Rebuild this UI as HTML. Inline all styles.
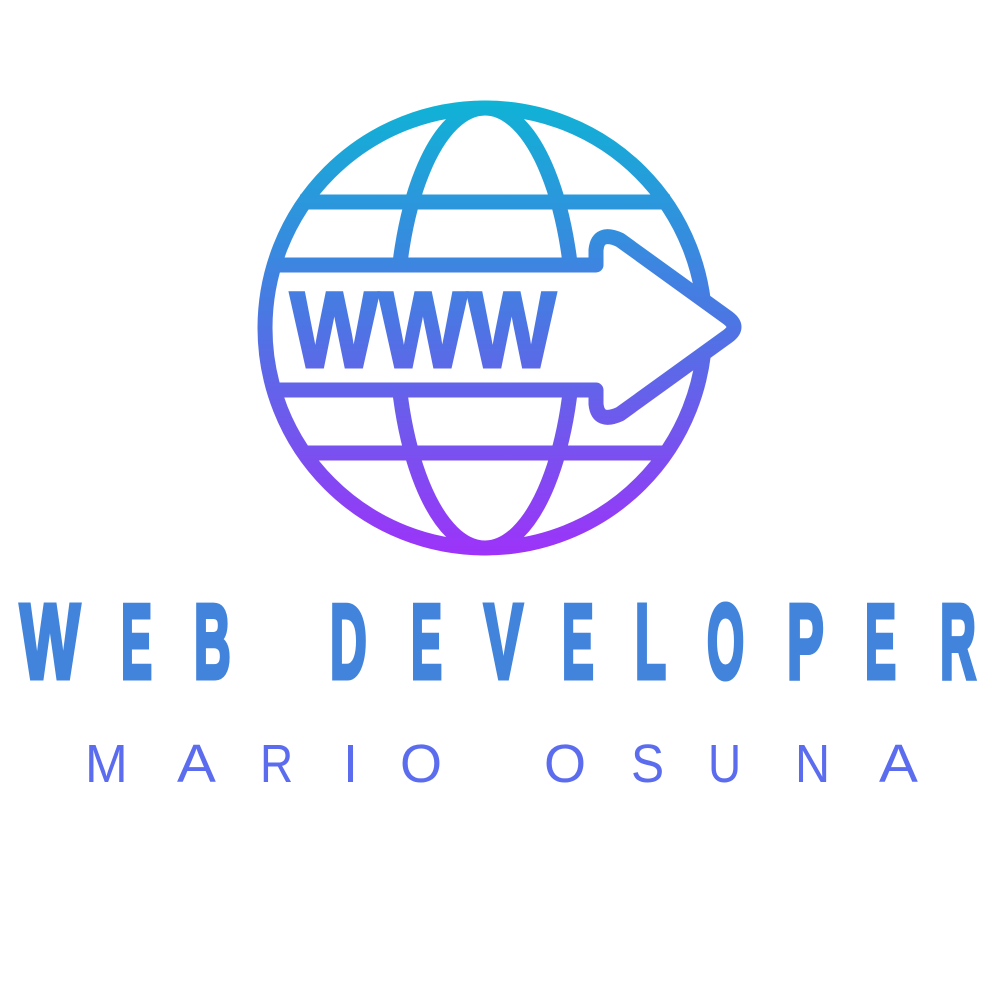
<!DOCTYPE html>
<html><head><meta charset="utf-8"><style>
html,body{margin:0;padding:0;background:#fff;width:1000px;height:1000px;overflow:hidden}
svg{display:block}
</style></head><body>
<svg width="1000" height="1000" viewBox="0 0 1000 1000" xmlns="http://www.w3.org/2000/svg">
<defs>
<linearGradient id="g" gradientUnits="userSpaceOnUse" x1="0" y1="101" x2="0" y2="555">
<stop offset="0" stop-color="#0fb3d5"/>
<stop offset="0.5" stop-color="#4e74e4"/>
<stop offset="1" stop-color="#9d33f9"/>
</linearGradient>
</defs>
<g fill="none" stroke="url(#g)" stroke-width="15">
<circle cx="485" cy="328" r="220"/>
<ellipse cx="485" cy="328" rx="89" ry="220"/>
<line x1="300" y1="202" x2="670" y2="202"/>
<line x1="300" y1="453" x2="670" y2="453"/>
</g>
<path d="M281 272 H596 V250 Q598 230 620 240 L728 318 Q738 327 728 336 L620 414 Q598 424 596 404 V383 H281 Z" fill="#fff"/>
<path d="M272 265 H596 V250 Q598 230 620 240 L728 318 Q740 327 728 336 L620 414 Q598 424 596 404 V390 H272" fill="none" stroke="url(#g)" stroke-width="15" stroke-linejoin="round"/>
<text x="290" y="367" font-family="Liberation Sans, sans-serif" font-weight="bold" font-size="108" fill="url(#g)" stroke="url(#g)" stroke-width="3" textLength="266" lengthAdjust="spacingAndGlyphs">WWW</text>
<g font-family="Liberation Sans, sans-serif" font-weight="bold" font-size="106" fill="#4284db" stroke="#4284db" stroke-width="5" stroke-linejoin="miter">
<text transform="translate(20,678) scale(0.6,1)">W</text>
<text transform="translate(121,678) scale(0.44,1)">E</text>
<text transform="translate(194,678) scale(0.48,1)">B</text>
<text transform="translate(330,678) scale(0.48,1)">D</text>
<text transform="translate(411,678) scale(0.44,1)">E</text>
<text transform="translate(484,678) scale(0.55,1)">V</text>
<text transform="translate(562,678) scale(0.45,1)">E</text>
<text transform="translate(635,678) scale(0.48,1)">L</text>
<text transform="translate(707,678) scale(0.45,1)">O</text>
<text transform="translate(787,678) scale(0.52,1)">P</text>
<text transform="translate(865,678) scale(0.44,1)">E</text>
<text transform="translate(940,678) scale(0.47,1)">R</text>
</g>
<g font-family="Liberation Sans, sans-serif" font-size="54" fill="#5b6cef">
<text transform="translate(85,782) scale(0.95,1)">M</text>
<text transform="translate(177,782) scale(1.08,1)">A</text>
<text transform="translate(260,782) scale(0.85,1)">R</text>
<text transform="translate(343,782)">I</text>
<text transform="translate(400,782) scale(1,1)">O</text>
<text transform="translate(544,782) scale(1,1)">O</text>
<text transform="translate(631,782) scale(0.92,1)">S</text>
<text transform="translate(708,782) scale(0.85,1)">U</text>
<text transform="translate(795,782) scale(0.9,1)">N</text>
<text transform="translate(879,782) scale(1.08,1)">A</text>
</g>
</svg>
</body></html>
